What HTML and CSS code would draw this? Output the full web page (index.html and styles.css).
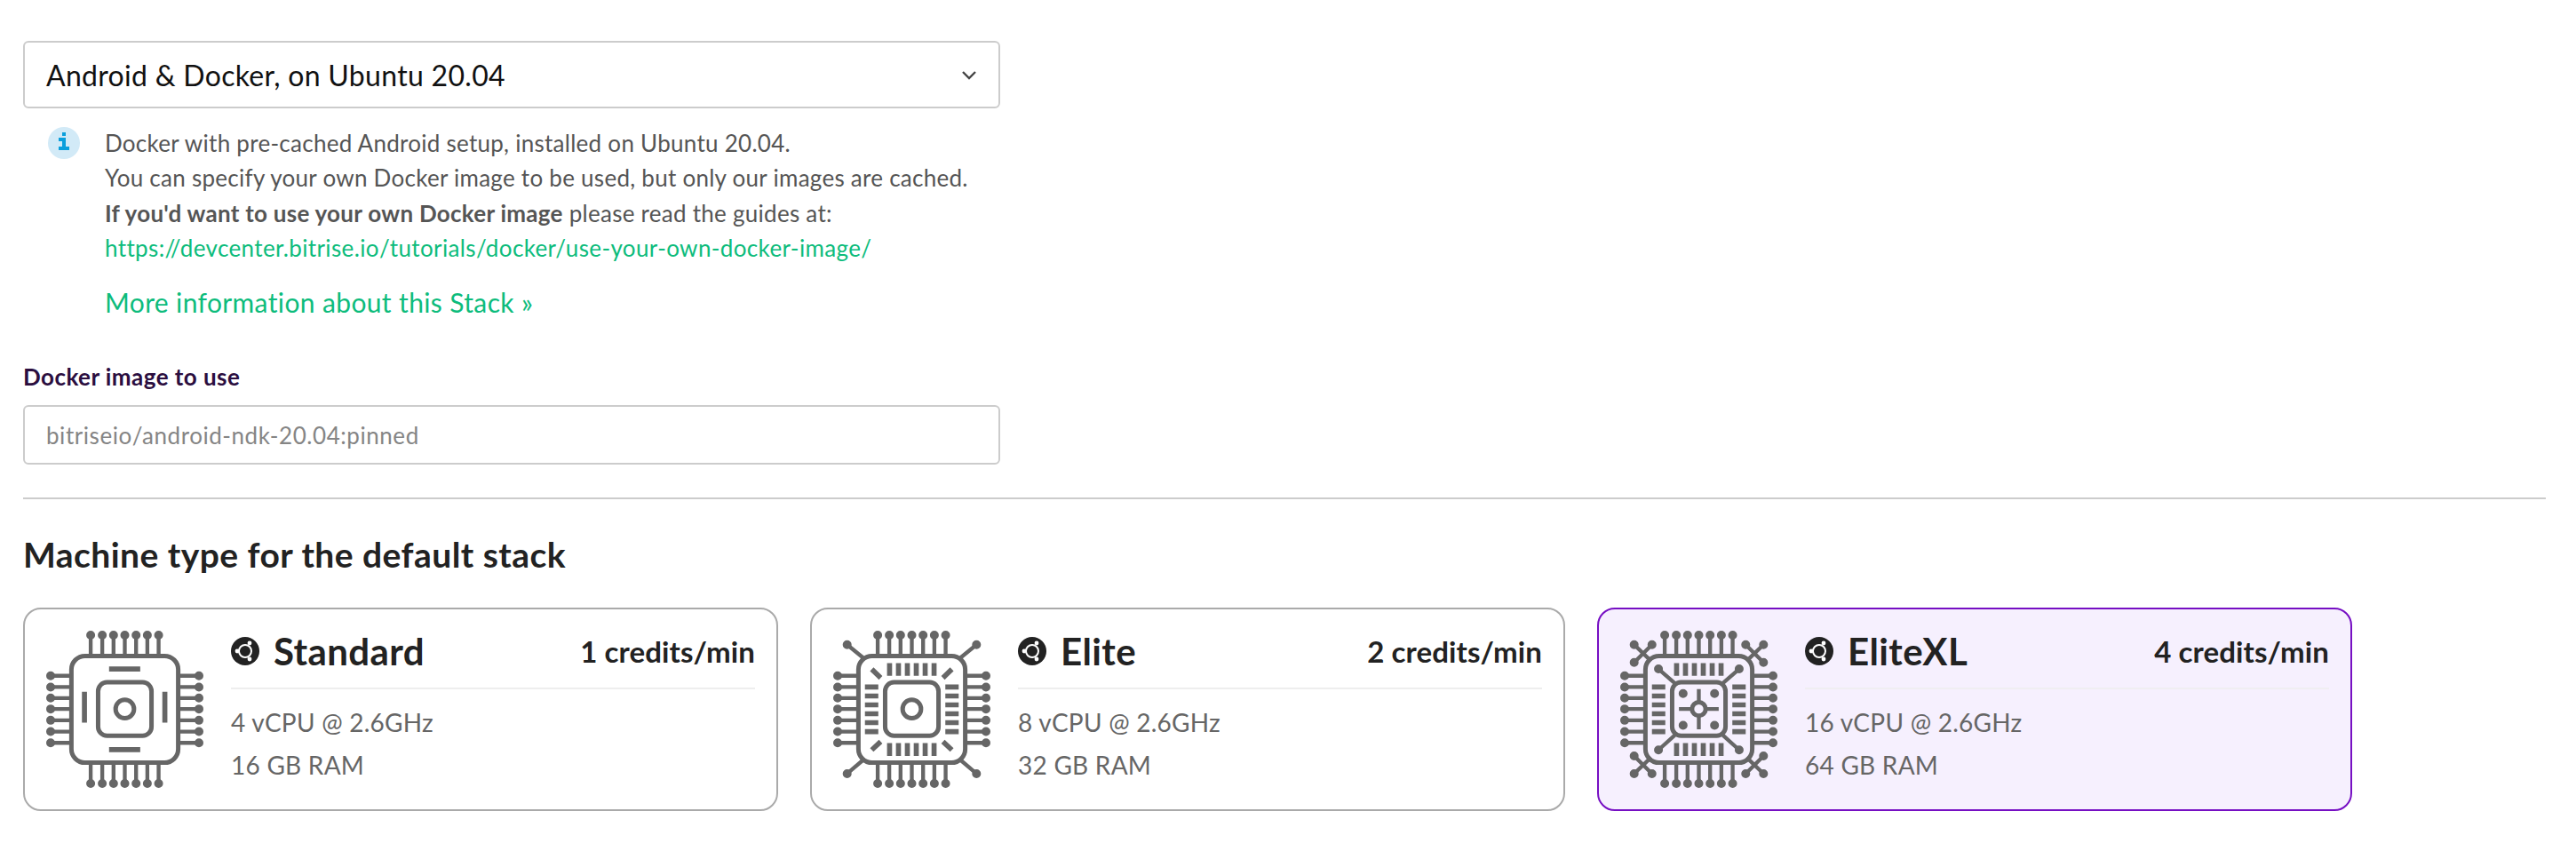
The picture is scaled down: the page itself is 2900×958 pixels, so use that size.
FILE: index.html
```html
<!DOCTYPE html>
<html lang="en">
<head>
    <meta charset="UTF-8">
    <title>Stack settings</title>
    <link rel="stylesheet" href="styles.css">
</head>
<body>
    <svg class="defs" width="0" height="0">
        <symbol id="chip-base" viewBox="95 103 530 530">
            <rect class="ln" x="180" y="188" width="360" height="360" rx="46"/>
            <rect class="ln" x="270" y="277" width="180" height="180" rx="30"/>
            <path class="pin" d="M245 118V188M284 118V188M322 118V188M360 118V188M398 118V188M436 118V188M474 118V188M245 618V548M284 618V548M322 618V548M360 618V548M398 618V548M436 618V548M474 618V548M110 255H180M110 293H180M110 330H180M110 367H180M110 405H180M110 443H180M110 481H180M610 255H540M610 293H540M610 330H540M610 367H540M610 405H540M610 443H540M610 481H540"/>
            <path class="dot" d="M245 118h0M284 118h0M322 118h0M360 118h0M398 118h0M436 118h0M474 118h0M245 618h0M284 618h0M322 618h0M360 618h0M398 618h0M436 618h0M474 618h0M110 255h0M110 293h0M110 330h0M110 367h0M110 405h0M110 443h0M110 481h0M610 255h0M610 293h0M610 330h0M610 367h0M610 405h0M610 443h0M610 481h0"/>
        </symbol>
        <symbol id="chip-ticks" viewBox="95 103 530 530">
            <path class="tick" d="M285 212V255M315 212V255M345 212V255M375 212V255M405 212V255M435 212V255M285 482V525M315 482V525M345 482V525M375 482V525M405 482V525M435 482V525M202 293H247M202 323H247M202 353H247M202 383H247M202 413H247M202 443H247M473 293H518M473 323H518M473 353H518M473 383H518M473 413H518M473 443H518"/>
        </symbol>
        <symbol id="ubuntu" viewBox="0 0 32 32">
            <circle cx="16" cy="16" r="16" fill="#222"/>
            <circle cx="16" cy="16" r="7" fill="none" stroke="#fff" stroke-width="2"/>
            <circle cx="7" cy="16" r="2.4" fill="#fff"/>
            <circle cx="21" cy="7" r="2.4" fill="#fff"/>
            <circle cx="21" cy="25" r="2.4" fill="#fff"/>
        </symbol>
    </svg>

    <div class="container">
        <div class="select">
            <span>Android &amp; Docker, on Ubuntu 20.04</span>
            <svg class="chevron" width="18" height="11" viewBox="0 0 18 11"><path d="M2 2l7 7 7-7"/></svg>
        </div>

        <div class="info">
            <svg class="info-icon" width="36" height="36" viewBox="0 0 36 36">
                <circle cx="18" cy="18" r="18" fill="#d2eaf7"/>
                <path fill="#0a9fdc" d="M16 6h4v4h-4zM12 12h8v10h4v4H12v-4h4v-6h-4z"/>
            </svg>
            <div>
                <p class="info-text">
                    Docker with pre-cached Android setup, installed on Ubuntu 20.04.<br>
                    You can specify your own Docker image to be used, but only our images are cached.<br>
                    <b>If you'd want to use your own Docker image</b> please read the guides at:<br>
                    <a href="#">https://devcenter.bitrise.io/tutorials/docker/use-your-own-docker-image/</a>
                </p>
                <a class="more" href="#">More information about this Stack »</a>
            </div>
        </div>

        <label class="field-label" for="dockerImage">Docker image to use</label>
        <input class="field" id="dockerImage" type="text" placeholder="bitriseio/android-ndk-20.04:pinned">

        <hr class="rule">

        <h2 class="section-title">Machine type for the default stack</h2>

        <div class="machines">
            <div class="card">
                <svg class="chip" viewBox="95 103 530 530">
                    <use href="#chip-base" x="95" y="103" width="530" height="530"/>
                    <circle class="ln" cx="360" cy="367" r="31"/>
                    <path class="tick" d="M307 232H412M307 504H412M224 309V413M495 309V413"/>
                </svg>
                <div class="card-body">
                    <div class="card-head">
                        <svg class="os" width="32" height="32"><use href="#ubuntu"/></svg>
                        <span class="card-name">Standard</span>
                        <span class="credits">1 credits/min</span>
                    </div>
                    <div class="specs">4 vCPU @ 2.6GHz<br>16 GB RAM</div>
                </div>
            </div>

            <div class="card">
                <svg class="chip" viewBox="95 103 530 530">
                    <use href="#chip-base" x="95" y="103" width="530" height="530"/>
                    <use href="#chip-ticks" x="95" y="103" width="530" height="530"/>
                    <circle class="ln" cx="360" cy="367" r="31"/>
                    <path class="pin" d="M197 195L142 150M523 195L578 150M197 538L142 585M523 538L578 585"/>
                    <path class="dot" d="M142 150h0M578 150h0M142 585h0M578 585h0"/>
                    <path class="tick" d="M225 233L255 262M495 233L465 262M225 505L255 477M495 505L465 477"/>
                </svg>
                <div class="card-body">
                    <div class="card-head">
                        <svg class="os" width="32" height="32"><use href="#ubuntu"/></svg>
                        <span class="card-name">Elite</span>
                        <span class="credits">2 credits/min</span>
                    </div>
                    <div class="specs">8 vCPU @ 2.6GHz<br>32 GB RAM</div>
                </div>
            </div>

            <div class="card selected">
                <svg class="chip" viewBox="95 103 530 530">
                    <use href="#chip-base" x="95" y="103" width="530" height="530"/>
                    <use href="#chip-ticks" x="95" y="103" width="530" height="530"/>
                    <path class="pin" d="M142 150L199 205M202 150L142 210M578 150L521 205M518 150L578 210M142 585L199 530M142 525L202 585M578 585L521 530M578 525L518 585M224 232L279 280M496 232L441 280M224 505L279 455M496 505L441 455M360 300V345M360 389V435M293 367H338M382 367H427"/>
                    <path class="dot" d="M142 150h0M202 150h0M142 210h0M578 150h0M518 150h0M578 210h0M142 585h0M202 585h0M142 525h0M578 585h0M518 585h0M578 525h0M224 232h0M496 232h0M224 505h0M496 505h0M307 315h0M413 315h0M307 422h0M413 422h0"/>
                    <circle class="ln" cx="360" cy="367" r="23"/>
                </svg>
                <div class="card-body">
                    <div class="card-head">
                        <svg class="os" width="32" height="32"><use href="#ubuntu"/></svg>
                        <span class="card-name">EliteXL</span>
                        <span class="credits">4 credits/min</span>
                    </div>
                    <div class="specs">16 vCPU @ 2.6GHz<br>64 GB RAM</div>
                </div>
            </div>
        </div>
    </div>
</body>
</html>
```

FILE: styles.css
```css
body {
    margin: 0;
    background: #fff;
    font-family: "Lato", "Liberation Sans", sans-serif;
    color: #222;
}

.defs {
    position: absolute;
}

.container {
    padding: 46px 34px 0 26px;
}

.select {
    width: 1100px;
    height: 76px;
    box-sizing: border-box;
    padding: 0 24px;
    display: flex;
    align-items: center;
    justify-content: space-between;
    border: 2px solid #ccc;
    border-radius: 6px;
    font-size: 32px;
    letter-spacing: 0.3px;
    color: #111;
}

.chevron path {
    fill: none;
    stroke: #444;
    stroke-width: 2.4;
}

.info {
    display: flex;
    gap: 28px;
    margin: 20px 0 0 28px;
}

.info-icon {
    flex: none;
    margin-top: 1px;
}

.info-text {
    margin: 0;
    font-size: 26px;
    line-height: 39.3px;
    letter-spacing: 0.27px;
    color: #555;
}

.info-text a {
    letter-spacing: 0.37px;
    color: #0dbc7c;
    text-decoration: none;
}

.more {
    display: block;
    margin-top: 21px;
    line-height: 40px;
    font-size: 30px;
    letter-spacing: 0.37px;
    color: #0dbc7c;
    text-decoration: none;
}

.field-label {
    display: block;
    margin-top: 50px;
    line-height: 28px;
    font-size: 26px;
    font-weight: 700;
    letter-spacing: 0.45px;
    color: #2b0e3f;
}

.field {
    display: block;
    width: 1100px;
    height: 67px;
    box-sizing: border-box;
    margin-top: 18px;
    padding: 0 24px;
    border: 2px solid #ccc;
    border-radius: 6px;
    font-family: inherit;
    font-size: 26px;
    letter-spacing: 0.55px;
}

.field::placeholder {
    color: #858585;
    opacity: 1;
}

.rule {
    height: 2px;
    margin: 37px 0 0;
    border: 0;
    background: #ccc;
}

.section-title {
    margin: 39px 0 0;
    line-height: 46px;
    font-size: 39px;
    font-weight: 700;
    letter-spacing: 0.45px;
    color: #222;
}

.machines {
    display: flex;
    gap: 36px;
    margin-top: 37px;
}

.card {
    width: 850px;
    height: 229px;
    box-sizing: border-box;
    padding: 24px 24px 0;
    display: flex;
    gap: 31px;
    border: 2px solid #aaa;
    border-radius: 20px;
}

.card.selected {
    background: #f6f0fe;
    border-color: #760fc3;
}

.chip {
    flex: none;
    width: 177px;
    height: 177px;
}

.ln, .pin, .tick, .dot {
    fill: none;
    stroke: #666;
}

.ln { stroke-width: 15; }
.pin { stroke-width: 13; }
.tick { stroke-width: 17; }
.dot {
    stroke-width: 30;
    stroke-linecap: round;
}

.card-body {
    flex: 1;
}

.card-head {
    display: flex;
    align-items: center;
    gap: 16px;
    height: 46px;
    padding-bottom: 18px;
    border-bottom: 2px solid #eee;
}

.selected .card-head {
    border-bottom-color: #f0eef2;
}

.card-name {
    flex: 1;
    font-size: 42px;
    font-weight: 700;
    letter-spacing: 0.4px;
}

.credits {
    font-size: 33px;
    font-weight: 700;
    letter-spacing: 0.1px;
}

.specs {
    margin-top: 13px;
    line-height: 48px;
    font-size: 28px;
    letter-spacing: 0.25px;
    color: #666;
}
```
